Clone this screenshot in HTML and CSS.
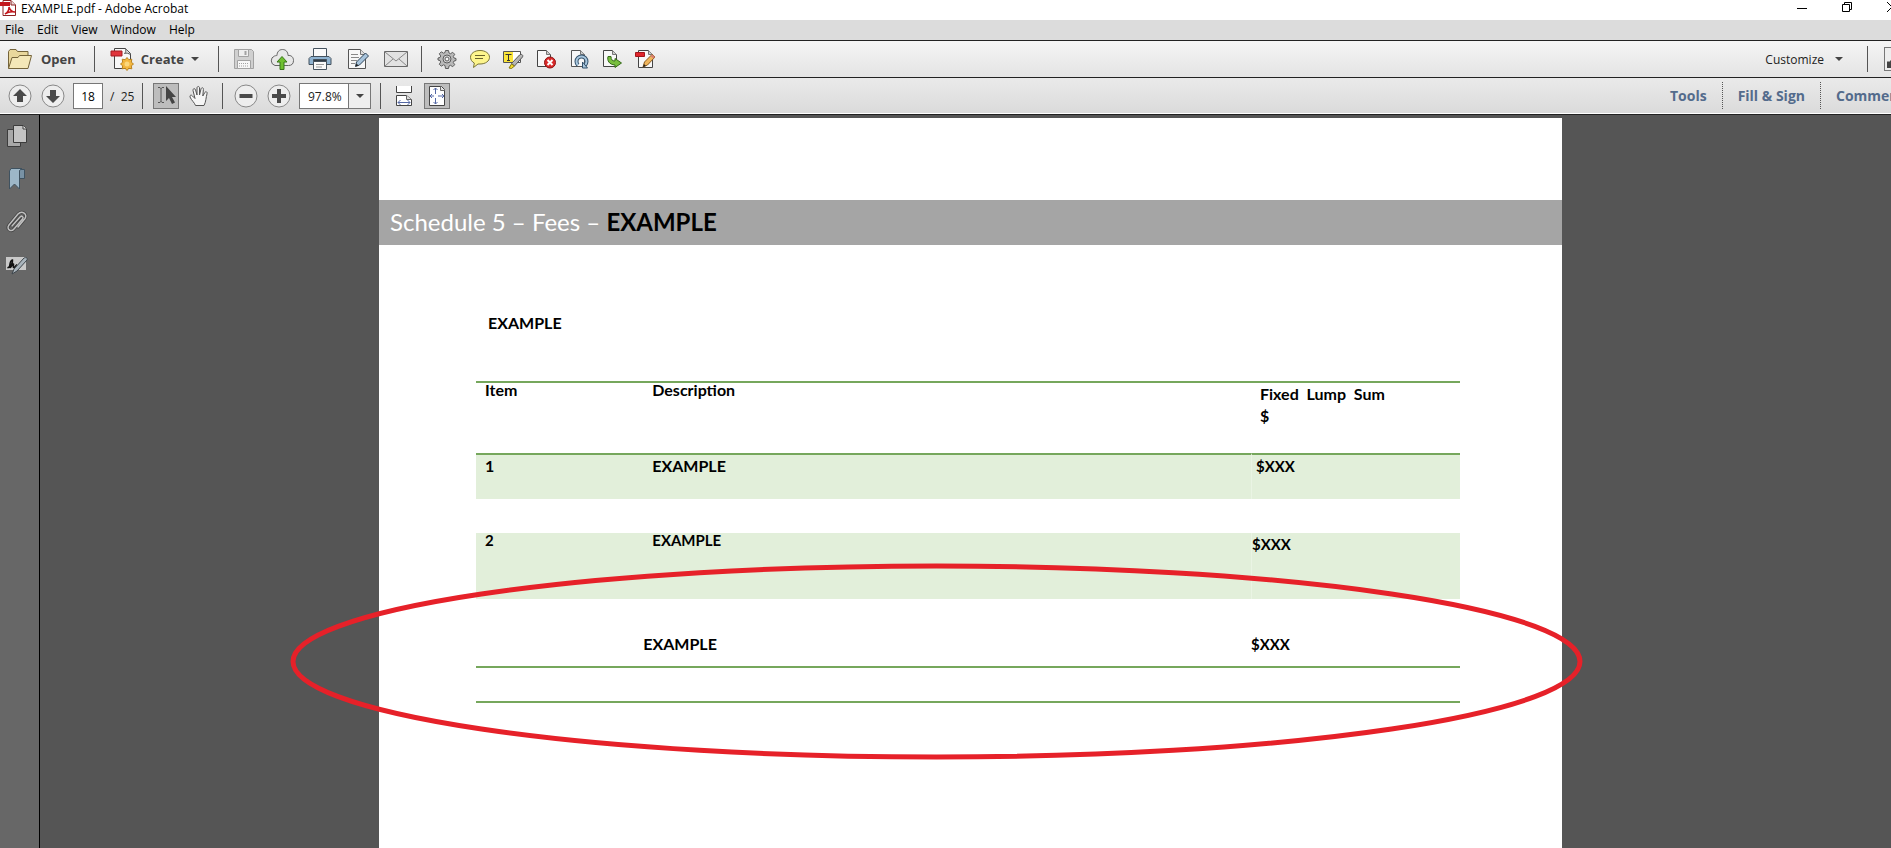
FILE: index.html
```html
<!DOCTYPE html>
<html lang="en">
<head>
  <meta charset="UTF-8">
  <title>EXAMPLE.pdf - Adobe Acrobat</title>
  <link rel="stylesheet" href="styles.css">
</head>
<body>
  <header class="titlebar">
    <svg class="app-icon" width="16" height="16" viewBox="0 0 16 16">
      <path d="M3 .5h8l4.500 4.500v10.500H3z" fill="#fff" stroke="#8e2323"/>
      <path d="M11 .5v4.500h4.500" fill="#e8d5d5" stroke="#8e2323"/>
      <path d="M0 2h10v4H0z" fill="#c4161c"/>
      <path d="M5 14c2-1 4-4 4-7 1 3 3 5 6 5-4-1-7 0-10 2z" fill="none" stroke="#c4161c" stroke-width="1.500"/>
    </svg>
    <span class="title">EXAMPLE.pdf - Adobe Acrobat</span>
    <div class="window-buttons">
      <button type="button" aria-label="Minimize"><svg width="12" height="12" viewBox="0 0 12 12"><path d="M1 7.500h10" stroke="#000"/></svg></button>
      <button type="button" aria-label="Restore"><svg width="12" height="12" viewBox="0 0 12 12" fill="none" stroke="#000"><path d="M1.500 3.500h7v7h-7zM3.500 3.500v-2h7v7h-2"/></svg></button>
      <button type="button" aria-label="Close"><svg width="12" height="12" viewBox="0 0 12 12" stroke="#000"><path d="M1 1l10 10M11 1L1 11"/></svg></button>
    </div>
  </header>

  <nav class="menubar">
    <button type="button">File</button>
    <button type="button">Edit</button>
    <button type="button">View</button>
    <button type="button">Window</button>
    <button type="button">Help</button>
  </nav>

  <div class="toolbar toolbar-main">
    <button type="button" class="text-btn open-btn">
      <svg width="26" height="22" viewBox="0 0 26 22" stroke="#75643a" stroke-linejoin="round">
        <path d="M1.500 20V3.500l1.500-2h6l1.500 2H21V8L20 20z" fill="#e9d79c"/>
        <path d="M1.500 20.500L5 9.500h6l1.500-2h12L21 20.500z" fill="#f4e7b8"/>
      </svg>
      Open
    </button>
    <span class="sep"></span>
    <button type="button" class="text-btn create-btn">
      <svg width="24" height="24" viewBox="0 0 24 24">
        <path d="M4.500 1.500h11l5 5v15h-16z" fill="#f8f8f8" stroke="#444"/>
        <path d="M15.500 1.500c1 2 0 4-1 5 2-1 4 0 6 1" fill="#ddd" stroke="#555"/>
        <path d="M1 4h11v5H1z" fill="#e0343c" stroke="#a51c22"/>
        <path d="M17 10.500l1.800 2.200 3-.5-.5 3 2.200 1.800-2.200 1.800.5 3-3-.5L17 23.500l-1.800-2.200-3 .5.500-3-2.200-1.800 2.200-1.800-.5-3 3 .5z" fill="#f3b73f" stroke="#b9811d"/>
        <circle cx="17" cy="17" r="2.500" fill="#fbd77c"/>
      </svg>
      Create
      <span class="caret"></span>
    </button>
    <span class="sep"></span>
    <div class="group group-wide">
      <button type="button" aria-label="Save">
        <svg width="22" height="22" viewBox="0 0 22 22" stroke="#a2a2a2" fill="#d0d0d0">
          <path d="M1.500 1.500h17l2 2v17h-19z"/><path d="M5.500 1.500h10v7h-10z" fill="#eee"/><path d="M12.500 3v4" stroke-width="2"/><path d="M4.500 12.500h13v8h-13z" fill="#f7f7f7"/><path d="M6 15.500h10M6 18h10" stroke-dasharray="1 1"/>
        </svg>
      </button>
      <button type="button" aria-label="Upload">
        <svg width="26" height="22" viewBox="0 0 26 22">
          <path d="M6 17.500a5 5 0 0 1-.5-9.500C7 7.500 8 7.500 8 7.500 8 4 10 1.500 13.500 1.500S19 4 19 7.500c3-.5 5.500 1.500 5.500 5s-2 5-5 5z" fill="#e8e8e8" stroke="#666"/>
          <path d="M13 8.500l5 5.500h-3v7.500h-4V14H8z" fill="#6fc030" stroke="#39761a"/>
        </svg>
      </button>
      <button type="button" aria-label="Print">
        <svg width="24" height="24" viewBox="0 0 24 24" stroke="#45525e">
          <path d="M5.500 1.500h13v9h-13z" fill="#fafafa"/>
          <path d="M3 9.500h18l2 2v6H1v-6z" fill="#8fb3d1"/>
          <path d="M5.500 12.500h13v2h-13z" fill="#303b44"/>
          <path d="M5.500 14.500h13v8h-13z" fill="#fafafa"/><path d="M8 17.500h8M8 20h6" stroke="#999"/>
        </svg>
      </button>
      <button type="button" aria-label="Edit">
        <svg width="22" height="22" viewBox="0 0 22 22">
          <path d="M1.500 1.500h12l5 5v14h-17z" fill="#f7f7f7" stroke="#555"/><path d="M13.500 1.500v5h5" fill="#ddd" stroke="#777"/>
          <path d="M4 6.500h7M4 9.500h8M4 12.500h6M4 15.500h4" stroke="#888"/>
          <path d="M8.500 18.500l1-4.500 9-9 3 3-9 9z" fill="#a8c4dc" stroke="#2e4458"/><path d="M8.500 18.500l1-3 2 2z" fill="#222"/>
        </svg>
      </button>
      <button type="button" aria-label="Email">
        <svg width="24" height="18" viewBox="0 0 24 18" stroke="#686868">
          <path d="M.5 1.500h23v15H.5z" fill="#e2e2e2"/><path d="M1 2l11 9L23 2M1 16l8-7M23 16l-8-7" fill="none" stroke="#888"/>
        </svg>
      </button>
    </div>
    <span class="sep"></span>
    <div class="group">
      <button type="button" aria-label="Settings">
        <svg width="20" height="20" viewBox="0 0 20 20" stroke="#5d5d5d">
          <path d="M8.500 1.500h3l.5 2.500 1.500.7 2.200-1.400 2 2-1.400 2.200.7 1.500 2 .5v2l-2 .5-.7 1.500 1.400 2.200-2 2-2.200-1.400-1.500.7-.5 2.500h-3L8 16.500l-1.500-.7-2.200 1.400-2-2 1.400-2.200-.7-1.500-2-.5V9l2-.5.7-1.500-1.400-2.200 2-2 2.200 1.400L8 3.500z" fill="#b9b9b9"/>
          <circle cx="10" cy="10" r="4" fill="#d5d5d5"/><circle cx="10" cy="10" r="2" fill="#f5f5f5"/>
        </svg>
      </button>
      <button type="button" aria-label="Comment">
        <svg width="20" height="18" viewBox="0 0 20 18"><path d="M10 .5c5.500 0 9.500 3 9.500 6.800S15.500 14 10 14H8l-4.500 3.500.8-4.500C2 12 .5 9.500.5 7.300.5 3.500 4.500.5 10 .5z" fill="#fdf58d" stroke="#7b7537"/><path d="M5 5.500h10M5 8.500h8" stroke="#69632c"/></svg>
      </button>
      <button type="button" aria-label="Highlight">
        <svg width="22" height="20" viewBox="0 0 22 20">
          <path d="M1.500 2.500h17v11h-17z" fill="#fff" stroke="#555"/><path d="M2 3h9v10H2z" fill="#fbe53a"/><path d="M3.500 5.500h6M6.500 5.500v6M5 11.500h3" stroke="#333"/>
          <path d="M9.500 14.500l8-8.500c2-1.500 4 0 3 2l-8 9z" fill="#b5b5b5" stroke="#555"/><path d="M7 19l2.500-4 3 2-3 2.500z" fill="#f2d92a" stroke="#857811"/>
        </svg>
      </button>
      <button type="button" aria-label="Delete page">
        <svg width="20" height="20" viewBox="0 0 20 20"><path d="M1.500 17.500v-16h9l4 4v12z" fill="#f8f8f8" stroke="#444"/><path d="M10.500 1.500v4h4" fill="#ccc" stroke="#777"/><circle cx="14" cy="13.500" r="5.500" fill="#d92a2a" stroke="#8f1414"/><path d="M11.500 11l5 5M16.500 11l-5 5" stroke="#fff" stroke-width="2"/></svg>
      </button>
      <button type="button" aria-label="Rotate page">
        <svg width="20" height="20" viewBox="0 0 20 20" fill="none"><path d="M2.500 17.500v-16h9l4 4v12z" fill="#f8f8f8" stroke="#555"/><path d="M11.500 1.500v4h4" fill="#ccc" stroke="#777"/><path d="M9 16a5 5 0 1 1 7 0" stroke="#35536d" stroke-width="4"/><path d="M9 16a5 5 0 1 1 7 0" stroke="#a9c7de" stroke-width="2"/><path d="M13.500 13v6h5z" fill="#a9c7de" stroke="#35536d"/></svg>
      </button>
      <button type="button" aria-label="Extract page">
        <svg width="20" height="20" viewBox="0 0 20 20"><path d="M1.500 17.500v-16h9l4 4v12z" fill="#f8f8f8" stroke="#444"/><path d="M10.500 1.500v4h4" fill="#ccc" stroke="#777"/><path d="M6 7.500c-1 4 1 8 7 8.500v2.500l6.500-4.500-6.500-4.500V12c-3 0-4-1.500-4-4.500z" fill="#78be3e" stroke="#356b18"/></svg>
      </button>
      <button type="button" aria-label="Edit PDF">
        <svg width="20" height="20" viewBox="0 0 20 20"><path d="M3.500 18.500v-17h10l4 4v13z" fill="#f8f8f8" stroke="#444"/><path d="M13.500 1.500v4h4" fill="#ccc" stroke="#777"/><path d="M.5 3.500h9v4h-9z" fill="#e0252c" stroke="#a3161b"/><path d="M8 18l1.500-5L17 5.500l3 2.500-7.500 8z" fill="#f0b55c" stroke="#8b5b1c"/><path d="M8 18l1-3 2 2z" fill="#222"/><path d="M15.500 7L17 5.500l3 2.500-1.500 1.500z" fill="#d87c72"/></svg>
      </button>
    </div>
    <div class="right">
      <button type="button" class="customize-btn">Customize <span class="caret"></span></button>
      <span class="sep"></span>
      <button type="button" class="panel-btn" aria-label="Show panel"><svg width="20" height="20" viewBox="0 0 20 20"><path d="M2 13l1-1 1 1 2-2 3 4 3-4 3 3v5H2z" fill="#444"/></svg></button>
    </div>
  </div>

  <div class="toolbar toolbar-nav">
    <div class="group">
      <button type="button" aria-label="Previous page"><svg width="24" height="24" viewBox="0 0 24 24"><circle cx="12" cy="12" r="11" fill="#eee" stroke="#888"/><path d="M12 5l7 7h-4v6H9v-6H5z" fill="#4a4a4a"/></svg></button>
      <button type="button" aria-label="Next page"><svg width="24" height="24" viewBox="0 0 24 24"><circle cx="12" cy="12" r="11" fill="#eee" stroke="#888"/><path d="M12 19l7-7h-4V6H9v6H5z" fill="#4a4a4a"/></svg></button>
    </div>
    <input class="page-number" type="text" value="18" aria-label="Page number">
    <span class="page-count">/&nbsp; 25</span>
    <span class="sep"></span>
    <button type="button" class="tool-btn active" aria-label="Select tool">
      <svg width="22" height="22" viewBox="0 0 22 22"><path d="M3 2.500h2l1 1 1-1h2M6 3v14M3 17.500h2l1-1 1 1h2" fill="none" stroke="#555"/><path d="M11 1v15l3-3 3 6 3-1.500-3-5.500h4z" fill="#444"/></svg>
    </button>
    <button type="button" class="tool-btn" aria-label="Hand tool">
      <svg width="20" height="22" viewBox="0 0 20 22"><path d="M6.500 20.500c-1-3-4-5-5.500-8.500-.5-2 1.500-2.500 2.500-1L6 13.500 4 5.500c-.3-2 2-2.500 2.500-.7L8 10V3c0-2 2.500-2 2.500 0v7L12 4c.5-2 2.700-1.500 2.400.5L13.800 11l2-3.500c1-1.500 3-.5 2.200 1.300C17 12 17 17 15 20.500z" fill="#f6f6f6" stroke="#555"/></svg>
    </button>
    <span class="sep"></span>
    <div class="group">
      <button type="button" aria-label="Zoom out"><svg width="24" height="24" viewBox="0 0 24 24"><circle cx="12" cy="12" r="11" fill="#eee" stroke="#888"/><path d="M5.500 10h13v4h-13z" fill="#4a4a4a"/></svg></button>
      <button type="button" aria-label="Zoom in"><svg width="24" height="24" viewBox="0 0 24 24"><circle cx="12" cy="12" r="11" fill="#eee" stroke="#888"/><path d="M10 5h4v5h5v4h-5v5h-4v-5H5v-4h5z" fill="#4a4a4a"/></svg></button>
    </div>
    <div class="zoom-box">
      <select aria-label="Zoom level">
        <option>97.8%</option>
        <option>100%</option>
        <option>125%</option>
      </select>
      <span class="zoom-arrow"><span class="caret"></span></span>
    </div>
    <span class="sep"></span>
    <button type="button" class="tool-btn" aria-label="Scrolling pages">
      <svg width="18" height="20" viewBox="0 0 18 20"><path d="M1.500 0v6.500h15V0" fill="#fff" stroke="#444"/><path d="M1.500 19.500v-10h10l5 4v6z" fill="#fff" stroke="#444"/><path d="M11.500 9.500v4h5" fill="#ddd" stroke="#666"/><path d="M3 16.500h12M5.500 14L3 16.500 5.500 19M12.500 14l2.500 2.500-2.500 2.500" fill="none" stroke="#5468a5"/></svg>
    </button>
    <button type="button" class="tool-btn active" aria-label="Fit one page">
      <svg width="18" height="20" viewBox="0 0 18 20"><path d="M1.500.5h12l3 3v16h-15z" fill="#fff" stroke="#444"/><path d="M12.500.5v4h4" fill="#ddd" stroke="#666"/><path d="M7.500 8V2M7.500 12v6M6 10H2M10 10h6M5.500 4l2-2 2 2M5.500 16l2 2 2-2M4 8l-2 2 2 2M14 8l2 2-2 2" fill="none" stroke="#5468a5"/></svg>
    </button>
    <div class="right tabs">
      <button type="button">Tools</button>
      <button type="button">Fill &amp; Sign</button>
      <button type="button">Comment</button>
    </div>
  </div>

  <main class="workspace">
    <aside class="side-rail">
      <button type="button" aria-label="Page thumbnails"><svg width="22" height="24" viewBox="0 0 22 24" stroke="#3c3c3c"><path d="M1.500 5.500h13v17h-13z" fill="#a8a8a8"/><path d="M7.500 1.500h10l3 3v14h-13z" fill="#c4c4c4"/><path d="M17 1.500v3.500h3.500" fill="#e4e4e4"/></svg></button>
      <button type="button" aria-label="Bookmarks"><svg width="20" height="24" viewBox="0 0 20 24" stroke="#3f5260"><path d="M12.500 2.500h5v9h-5z" fill="#7892a5"/><path d="M2.500 22V4l1.500-2.500h11l-2.500 2V22l-5-5z" fill="#9db7c8"/></svg></button>
      <button type="button" aria-label="Attachments"><svg width="22" height="24" viewBox="0 0 22 24" fill="none" stroke-linecap="round"><path d="M6 16l8-9c2-2 4 0 2.500 2L8 19c-3 3.500-8 0-5-4L12 4c4-4 10 0 7 4.500L12 17" stroke="#444" stroke-width="3"/><path d="M6 16l8-9c2-2 4 0 2.500 2L8 19c-3 3.500-8 0-5-4L12 4c4-4 10 0 7 4.500L12 17" stroke="#c0c0c0" stroke-width="1.500"/></svg></button>
      <button type="button" aria-label="Signatures"><svg width="24" height="20" viewBox="0 0 24 20"><path d="M1 2h20v13H1z" fill="#c9c9c9"/><path d="M2.500 13c3-1.500 5.500-5 5-8-2 0-3.500 6-2.500 7.500 1 .5 2-3.500 3.500-3.500.5 1-1 3 0 3.500s2-2 3.500-3" fill="none" stroke="#111" stroke-width="1.500"/><path d="M7 19l2-5L19 3c2-1 4 0 3 2L12 16z" fill="#a9b4bc" stroke="#3d454b"/></svg></button>
    </aside>

    <div class="canvas">
      <article class="page">
        <h1 class="band">Schedule 5 – Fees – <strong>EXAMPLE</strong></h1>
        <div class="page-body">
          <h2>EXAMPLE</h2>
          <table class="fees">
            <thead>
              <tr>
                <th class="col-item" scope="col">Item</th>
                <th class="col-desc" scope="col">Description</th>
                <th class="col-sum" scope="col">Fixed&nbsp; Lump&nbsp; Sum<br>$</th>
              </tr>
            </thead>
            <tbody>
              <tr class="row-first shaded">
                <td>1</td>
                <td>EXAMPLE</td>
                <td class="amount">$XXX</td>
              </tr>
              <tr class="row-gap"><td colspan="3"></td></tr>
              <tr class="row-second shaded">
                <td>2</td>
                <td>EXAMPLE</td>
                <td class="amount">$XXX</td>
              </tr>
              <tr class="row-total">
                <td></td>
                <td class="total-label">EXAMPLE</td>
                <td class="amount">$XXX</td>
              </tr>
              <tr class="row-end"><td colspan="3"></td></tr>
            </tbody>
          </table>
        </div>
        <svg class="highlight"><ellipse cx="50%" cy="50%" rx="50%" ry="50%"/></svg>
      </article>
    </div>
  </main>
</body>
</html>
```

FILE: styles.css
```css
* {
  box-sizing: border-box;
}
body {
  margin: 0;
  min-height: 100vh;
  display: flex;
  flex-direction: column;
  overflow: hidden;
  font-family: "Open Sans", "Noto Sans", sans-serif;
  font-size: 12px;
  color: #222;
  background: #555;
}
button {
  display: flex;
  align-items: center;
  justify-content: center;
  flex: none;
  margin: 0;
  padding: 0;
  border: 0;
  background: none;
  font: inherit;
  color: inherit;
  white-space: nowrap;
}
svg {
  display: block;
  flex: none;
}

/* title and menu */
.titlebar {
  display: flex;
  align-items: center;
  height: 20px;
  padding-bottom: 2px;
  background: #fff;
  color: #000;
}
.title {
  margin-left: 5px;
  line-height: 16px;
}
.app-icon {
  align-self: flex-start;
}
.window-buttons {
  display: flex;
  gap: 33px;
  height: 14px;
  margin-left: auto;
  margin-right: -7px;
  align-self: flex-start;
}
.menubar {
  display: flex;
  gap: 13px;
  height: 20px;
  padding: 0 5px 2px;
  background: #dcdcdc;
  color: #000;
}

/* toolbars */
.toolbar {
  display: flex;
  align-items: center;
  height: 37px;
  border-top: 1px solid #222;
  background: linear-gradient(#f5f5f5, #e4e4e4);
}
.toolbar-nav {
  height: 38px;
  border-bottom: 1px solid #222;
  background: linear-gradient(#eaeaea, #dadada);
  box-shadow: inset 0 -1px #fff;
}
.sep {
  flex: none;
  width: 1px;
  height: 26px;
  background: #555;
}
.text-btn {
  font-size: 13px;
  font-weight: bold;
  color: #444;
}
.open-btn {
  gap: 8px;
  margin: 0 18px 0 7px;
}
.create-btn {
  gap: 7px;
  margin: 0 19px 0 15px;
}
.caret {
  border: 4px solid transparent;
  border-top-color: #444;
  border-bottom: 0;
}
.group {
  display: flex;
}
.group button {
  width: 33px;
  height: 26px;
}
.group-wide {
  margin: 0 6px;
}
.group-wide button {
  width: 38px;
}
.toolbar-main .group:not(.group-wide) {
  margin-left: 9px;
}
.right {
  display: flex;
  align-items: center;
  margin-left: auto;
}
.customize-btn {
  gap: 11px;
  margin-right: 24px;
}
.panel-btn {
  width: 7px;
  height: 24px;
  margin-left: 16px;
  justify-content: flex-start;
  overflow: hidden;
  border: 1px solid #777;
  border-right: 0;
  background: #eee;
}
.toolbar-nav .group:first-child {
  margin-left: 3px;
}
.page-number {
  width: 30px;
  height: 26px;
  margin-left: 4px;
  padding: 0;
  border: 1px solid #777;
  font: inherit;
  text-align: center;
  background: #fff;
}
.page-count {
  width: 39px;
  padding-left: 7px;
}
.tool-btn {
  width: 26px;
  height: 26px;
}
.tool-btn.active {
  border: 1px solid #777;
  background: #bdbdbd;
}
.sep + .tool-btn {
  margin-left: 10px;
}
.tool-btn + .tool-btn {
  margin: 0 10px 0 7px;
}
.sep + .group {
  margin-left: 6px;
}
.zoom-box {
  position: relative;
  width: 72px;
  height: 26px;
  margin: 0 9px 0 4px;
}
.zoom-box select {
  appearance: none;
  width: 100%;
  height: 100%;
  padding: 0 8px;
  border: 1px solid #777;
  border-radius: 0;
  background: #fff;
  font: inherit;
  color: #222;
}
.zoom-arrow {
  position: absolute;
  top: 1px;
  right: 1px;
  bottom: 1px;
  width: 22px;
  display: flex;
  align-items: center;
  justify-content: center;
  border-left: 1px solid #777;
  background: #eee;
  pointer-events: none;
}
.tabs {
  padding-bottom: 2px;
  font-size: 14px;
  font-weight: bold;
  color: #536b8c;
}
.tabs button {
  height: 27px;
  padding: 0 15px;
}
.tabs button + button {
  border-left: 1px dotted #555;
}
.tabs button:last-child {
  width: 71px;
  padding-right: 0;
  justify-content: flex-start;
  overflow: hidden;
}

/* workspace */
.workspace {
  display: flex;
  flex: 1;
}
.side-rail {
  display: flex;
  flex-direction: column;
  align-items: flex-start;
  gap: 19px;
  width: 40px;
  padding: 9px 6px;
  border-right: 1px solid #000;
  background: #676767;
}
.side-rail button {
  width: 22px;
  height: 24px;
}
.canvas {
  flex: 1;
  display: grid;
  grid-template-columns: 339fr 1183fr 329fr;
  padding-top: 3px;
  background: #555;
}
.page {
  position: relative;
  grid-column: 2;
  padding-top: 82px;
  background: #fff;
  color: #000;
  font-family: Lato, "Open Sans", sans-serif;
  font-size: 16px;
  line-height: 22px;
}
.band {
  margin: 0;
  padding: 0 11px 2px;
  background: #a5a5a5;
  color: #fff;
  font-size: 24px;
  font-weight: normal;
  line-height: 43px;
}
.band strong {
  color: #000;
}
.page-body {
  padding: 67px 102px 0 97px;
}
.page-body h2 {
  margin: 0 0 47px;
  padding-left: 12px;
  font-size: 16px;
  line-height: 22px;
}
.fees {
  width: 100%;
  table-layout: fixed;
  border-spacing: 0;
  font-weight: bold;
}
.fees th,
.fees td {
  padding: 0 0 0 9px;
  text-align: left;
  vertical-align: top;
}
.fees th {
  height: 72px;
  border-top: 2px solid #76a75c;
}
.col-item {
  width: 17%;
}
.col-sum {
  width: 209px;
}
.fees .col-item,
.fees .col-desc {
  line-height: 14px;
}
.row-first td {
  height: 46px;
  border-top: 2px solid #76a75c;
}
.shaded {
  background: #e2efda;
}
.shaded .amount {
  border-left: 1px solid #eaf4e4;
}
.row-gap td {
  height: 34px;
}
.row-second td {
  height: 66px;
  font-size: 15px;
  line-height: 14px;
}
.row-total td {
  height: 67px;
  padding-top: 34px;
}
.fees .amount {
  font-size: 15px;
  line-height: 22px;
}
.fees .row-first .amount {
  padding-left: 4px;
}
.fees .row-second .amount,
.fees .row-total .amount,
.fees .total-label {
  padding-left: 0;
}
.row-end td {
  height: 37px;
  border: solid #76a75c;
  border-width: 2px 0;
}

/* red ring around the total */
.highlight {
  position: absolute;
  top: 448px;
  left: -86px;
  width: calc(100% + 104px);
  height: 191px;
  overflow: visible;
  fill: none;
  stroke: #e62129;
  stroke-width: 5px;
}
```
